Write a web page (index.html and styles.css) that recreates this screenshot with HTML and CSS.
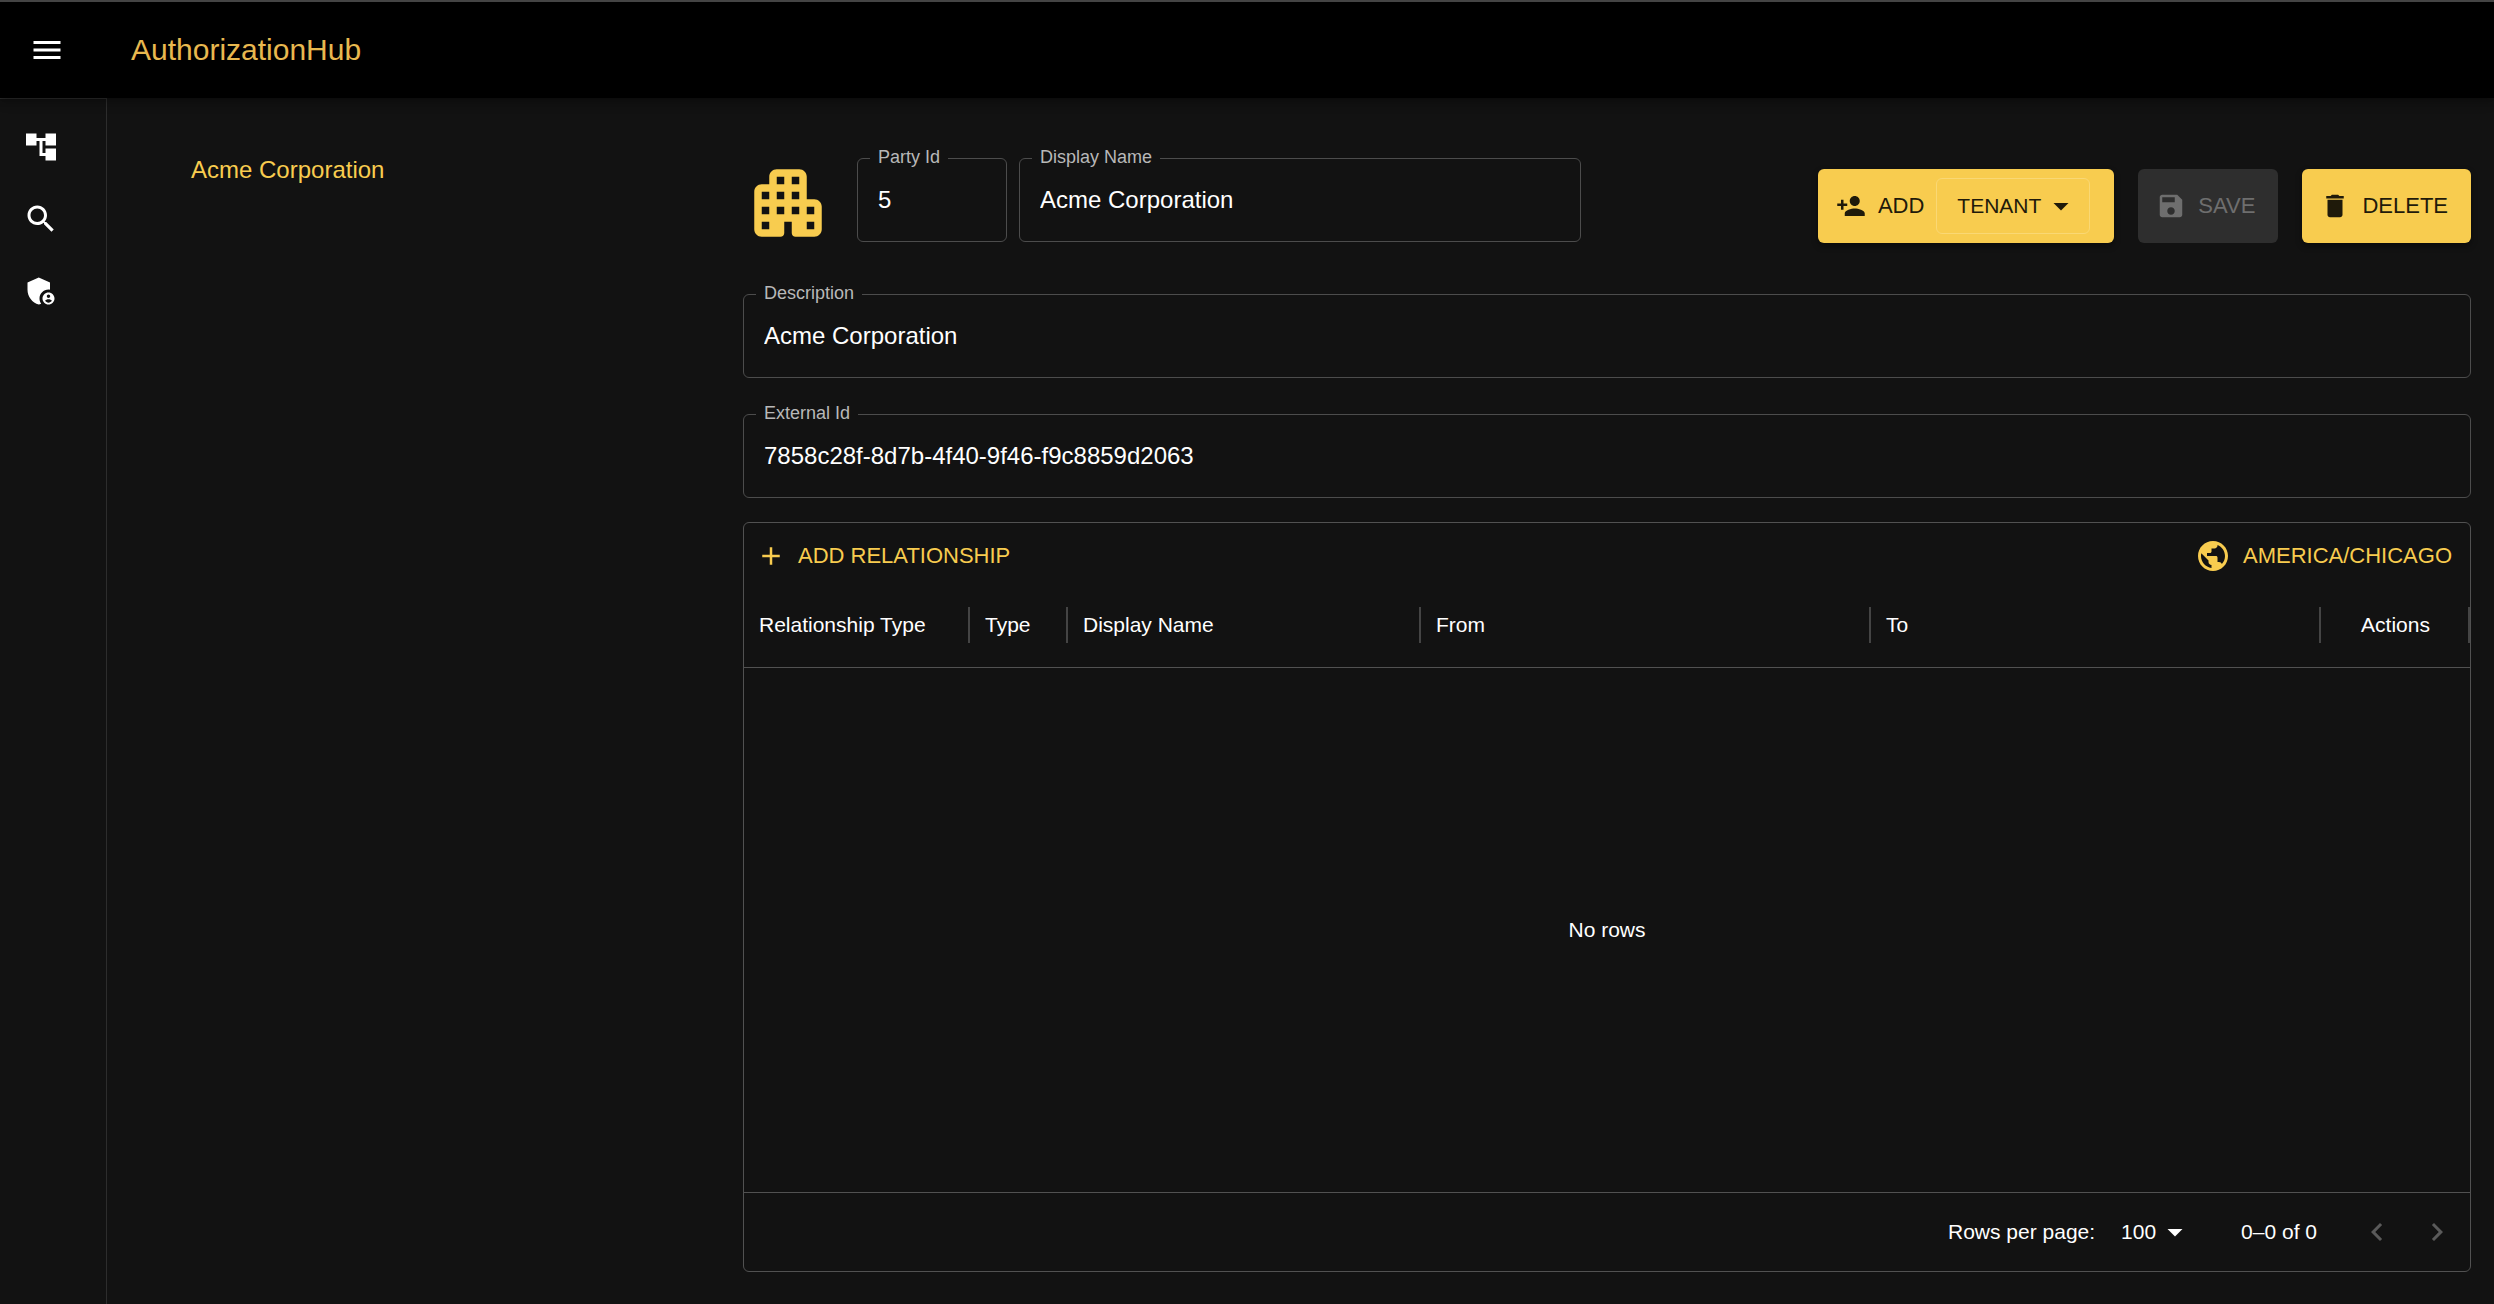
FILE: index.html
```
<!DOCTYPE html>
<html lang="en">
<head>
    <meta charset="UTF-8">
    <meta name="viewport" content="width=device-width, initial-scale=1.0">
    <title>AuthorizationHub</title>
    <link rel="stylesheet" href="styles.css">
</head>
<body>
    <header class="app-bar">
        <button class="icon-button menu-button" type="button" aria-label="Open menu">
            <svg class="icon" viewBox="0 0 24 24"><path d="M3 18h18v-2H3v2zm0-5h18v-2H3v2zm0-7v2h18V6H3z"/></svg>
        </button>
        <h1 class="app-title">AuthorizationHub</h1>
    </header>

    <div class="layout">
        <nav class="sidebar">
            <a class="nav-link" href="#tree" aria-label="Tree">
                <svg class="icon" viewBox="0 0 24 24"><path d="M22 11V3h-7v3H9V3H2v8h7V8h2v10h4v3h7v-8h-7v3h-2V8h2v3z"/></svg>
            </a>
            <a class="nav-link" href="#search" aria-label="Search">
                <svg class="icon" viewBox="0 0 24 24"><path d="M15.5 14h-.79l-.28-.27C15.41 12.59 16 11.11 16 9.5 16 5.91 13.09 3 9.5 3S3 5.91 3 9.5 5.91 16 9.5 16c1.61 0 3.09-.59 4.23-1.57l.27.28v.79l5 4.99L20.49 19l-4.99-5zm-6 0C7.01 14 5 11.99 5 9.5S7.01 5 9.5 5 14 7.01 14 9.5 11.99 14 9.5 14z"/></svg>
            </a>
            <a class="nav-link" href="#admin" aria-label="Administration">
                <svg class="icon" viewBox="0 0 24 24">
                    <path d="M17 11c.34 0 .67.04 1 .09V6.27L10.5 3 3 6.27v4.91c0 4.54 3.2 8.79 7.5 9.82.55-.13 1.08-.32 1.6-.55-.69-.98-1.1-2.17-1.1-3.45 0-3.31 2.69-6 6-6z"/>
                    <path d="M17 13c-2.21 0-4 1.79-4 4s1.79 4 4 4 4-1.79 4-4-1.79-4-4-4zm0 1.38c.62 0 1.12.51 1.12 1.12s-.51 1.12-1.12 1.12-1.12-.51-1.12-1.12.5-1.12 1.12-1.12zm0 5.37c-.93 0-1.74-.46-2.24-1.17.05-.72 1.51-1.08 2.24-1.08s2.19.36 2.24 1.08c-.5.71-1.31 1.17-2.24 1.17z"/>
                </svg>
            </a>
        </nav>

        <aside class="party-tree">
            <a class="tree-item" href="#acme">Acme Corporation</a>
        </aside>

        <main class="details">
            <div class="details-header">
                <svg class="party-icon" viewBox="0 0 24 24"><path d="M17 11V5c0-1.1-.9-2-2-2H9c-1.1 0-2 .9-2 2v2H5c-1.1 0-2 .9-2 2v10c0 1.1.9 2 2 2h5c.55 0 1-.45 1-1v-3h2v3c0 .55.45 1 1 1h5c1.1 0 2-.9 2-2v-6c0-1.1-.9-2-2-2h-2zM7 19H5v-2h2v2zm0-4H5v-2h2v2zm0-4H5V9h2v2zm4 4H9v-2h2v2zm0-4H9V9h2v2zm0-4H9V5h2v2zm4 8h-2v-2h2v2zm0-4h-2V9h2v2zm0-4h-2V5h2v2zm4 12h-2v-2h2v2zm0-4h-2v-2h2v2z"/></svg>
                <div class="header-fields">
                    <fieldset class="field field-id">
                        <legend><label for="partyId">Party Id</label></legend>
                        <input type="text" id="partyId" value="5">
                    </fieldset>
                    <fieldset class="field field-name">
                        <legend><label for="displayName">Display Name</label></legend>
                        <input type="text" id="displayName" value="Acme Corporation">
                    </fieldset>
                </div>
                <div class="actions">
                    <div class="add-group">
                        <button class="button button-add" type="button">
                            <svg class="icon-small" viewBox="0 0 24 24"><path d="M15 12c2.21 0 4-1.79 4-4s-1.79-4-4-4-4 1.79-4 4 1.79 4 4 4zm-9-2V7H4v3H1v2h3v3h2v-3h3v-2H6zm9 4c-2.67 0-8 1.34-8 4v2h16v-2c0-2.66-5.33-4-8-4z"/></svg>
                            ADD
                        </button>
                        <div class="select tenant-select">
                            <select aria-label="Type to add">
                                <option>TENANT</option>
                            </select>
                            <svg class="icon" viewBox="0 0 24 24"><path d="m7 10 5 5 5-5z"/></svg>
                        </div>
                    </div>
                    <button class="button button-filled" type="button" disabled>
                        <svg class="icon-small" viewBox="0 0 24 24"><path d="M17 3H5c-1.11 0-2 .9-2 2v14c0 1.1.89 2 2 2h14c1.1 0 2-.9 2-2V7l-4-4zm-5 16c-1.66 0-3-1.34-3-3s1.34-3 3-3 3 1.34 3 3-1.34 3-3 3zm3-10H5V5h10v4z"/></svg>
                        SAVE
                    </button>
                    <button class="button button-filled" type="button">
                        <svg class="icon-small" viewBox="0 0 24 24"><path d="M6 19c0 1.1.9 2 2 2h8c1.1 0 2-.9 2-2V7H6v12zM19 4h-3.5l-1-1h-5l-1 1H5v2h14V4z"/></svg>
                        DELETE
                    </button>
                </div>
            </div>

            <div class="field-list">
                <fieldset class="field">
                    <legend><label for="description">Description</label></legend>
                    <input type="text" id="description" value="Acme Corporation">
                </fieldset>
                <fieldset class="field">
                    <legend><label for="externalId">External Id</label></legend>
                    <input type="text" id="externalId" value="7858c28f-8d7b-4f40-9f46-f9c8859d2063">
                </fieldset>
            </div>

            <section class="grid">
                <div class="grid-toolbar">
                    <button class="button button-text" type="button">
                        <svg class="icon-small" viewBox="0 0 24 24"><path d="M19 13h-6v6h-2v-6H5v-2h6V5h2v6h6v2z"/></svg>
                        ADD RELATIONSHIP
                    </button>
                    <button class="button button-text" type="button">
                        <svg class="icon" viewBox="0 0 24 24"><path d="M12 2C6.48 2 2 6.48 2 12s4.48 10 10 10 10-4.48 10-10S17.52 2 12 2zm-1 17.93c-3.95-.49-7-3.85-7-7.93 0-.62.08-1.21.21-1.79L9 15v1c0 1.1.9 2 2 2v1.93zm6.9-2.54c-.26-.81-1-1.39-1.9-1.39h-1v-3c0-.55-.45-1-1-1H8v-2h2c.55 0 1-.45 1-1V7h2c1.1 0 2-.9 2-2v-.41c2.93 1.19 5 4.06 5 7.41 0 2.08-.8 3.97-2.1 5.39z"/></svg>
                        AMERICA/CHICAGO
                    </button>
                </div>
                <table class="grid-table">
                    <thead>
                        <tr>
                            <th class="col-relationship">Relationship Type</th>
                            <th class="col-type">Type</th>
                            <th>Display Name</th>
                            <th class="col-date">From</th>
                            <th class="col-date">To</th>
                            <th class="col-actions">Actions</th>
                        </tr>
                    </thead>
                </table>
                <div class="grid-empty">No rows</div>
                <div class="grid-footer">
                    <label for="pageSize">Rows per page:</label>
                    <div class="select page-select">
                        <select id="pageSize">
                            <option>100</option>
                        </select>
                        <svg class="icon" viewBox="0 0 24 24"><path d="m7 10 5 5 5-5z"/></svg>
                    </div>
                    <span class="page-range">0–0 of 0</span>
                    <button class="icon-button" type="button" aria-label="Previous page" disabled>
                        <svg class="icon" viewBox="0 0 24 24"><path d="M15.41 16.59 10.83 12l4.58-4.59L14 6l-6 6 6 6z"/></svg>
                    </button>
                    <button class="icon-button" type="button" aria-label="Next page" disabled>
                        <svg class="icon" viewBox="0 0 24 24"><path d="M8.59 16.59 13.17 12 8.59 7.41 10 6l6 6-6 6z"/></svg>
                    </button>
                </div>
            </section>
        </main>
    </div>
</body>
</html>
```
FILE: styles.css
```
* { box-sizing: border-box; }
body { margin: 0; min-height: 100vh; display: flex; flex-direction: column; background: #121212; color: #fff; font-family: "Liberation Sans", Arial, sans-serif; font-size: 24px; }
button, input, select { font-family: inherit; color: inherit; }
a { color: inherit; text-decoration: none; }
svg { display: block; flex-shrink: 0; fill: currentColor; }
.icon { width: 36px; height: 36px; }
.icon-small { width: 30px; height: 30px; }

/* Header */
.app-bar { position: relative; z-index: 1; display: flex; align-items: center; gap: 54px; height: 98px; padding: 0 17px; background: #000; border-top: 2px solid #444; box-shadow: 0 3px 6px rgba(0, 0, 0, 0.2), 0 3px 12px rgba(0, 0, 0, 0.2); }
.app-title { margin: 0; color: #e8b84f; font-size: 30px; font-weight: normal; }
.icon-button { padding: 12px; border: none; background: none; cursor: pointer; }
.icon-button:disabled { color: #5a5a5a; cursor: default; }

.layout { flex: 1; display: flex; }

/* Sidebar */
.sidebar { width: 107px; padding-top: 12px; border-top: 1px solid #2d2d2d; border-right: 1px solid #2d2d2d; }
.nav-link { display: flex; align-items: center; height: 72px; padding-left: 23px; }
.nav-link:hover { background: #222; }

.party-tree { flex: 0 0 636px; padding: 54px 84px; }
.tree-item { display: block; color: #f8cc4f; line-height: 36px; }

/* Details */
.details { flex: 1; display: flex; flex-direction: column; gap: 24px; padding: 49px 23px 32px 0; }
.details-header { display: flex; align-items: flex-start; gap: 24px; margin-bottom: 11px; }
.party-icon { width: 90px; height: 90px; margin-top: 11px; color: #f8cc4f; }
.header-fields { flex: 1; display: flex; gap: 12px; }
.field { min-width: 0; margin: 0; padding: 0 12px 11px; border: 1px solid #4c4c4c; border-radius: 6px; }
.field legend { margin: 0; padding: 0 8px 3px; color: #b8b8b8; font-size: 18px; line-height: 20px; }
.field label { display: block; }
.field input { display: block; width: 100%; height: 60px; padding: 0 8px; border: none; outline: none; background: none; font-size: 24px; }
.field-id { width: 150px; }
.field-name { width: 562px; }
.field-list { display: flex; flex-direction: column; gap: 25px; }

/* Buttons */
.actions { display: flex; gap: 24px; padding-top: 22px; }
.button { display: flex; align-items: center; gap: 12px; border: none; border-radius: 6px; background: none; font-size: 22px; cursor: pointer; }
.button-filled, .add-group { height: 74px; background: #f8cc4f; color: #1f1a0a; border-radius: 6px; box-shadow: 0 3px 6px rgba(0, 0, 0, 0.4); }
.button-filled { padding: 0 23px 0 18px; }
.button-filled:disabled { background: #2e2e2e; color: #6e6e6e; box-shadow: none; cursor: default; }
.button-add { height: 74px; padding: 0 12px 0 18px; }
.button-text { height: 54px; padding: 0 6px; color: #f8cc4f; }
.add-group { display: flex; align-items: center; padding-right: 24px; }

.select { display: grid; align-items: center; }
.select select, .select svg { grid-area: 1 / 1; }
.select select { width: 100%; border: none; outline: none; appearance: none; background: none; font-size: 21px; cursor: pointer; }
.select svg { justify-self: end; pointer-events: none; }
.tenant-select { width: 154px; height: 56px; padding-right: 10px; border: 1px solid #fad874; border-radius: 6px; }
.tenant-select select { height: 54px; padding: 0 36px 2px 20px; }

/* Relationships grid */
.grid { flex: 1; display: flex; flex-direction: column; border: 1px solid #515151; border-radius: 6px; font-size: 21px; }
.grid-toolbar { display: flex; justify-content: space-between; padding: 6px 12px 0; }
.grid-toolbar .button-text:first-child { padding-left: 0; }
.grid-table { width: 100%; border-collapse: separate; border-spacing: 0; table-layout: fixed; }
.grid-table th { height: 85px; padding: 0 15px; border-bottom: 1px solid #515151; background: linear-gradient(#444, #444) right center / 2px 36px no-repeat; font-weight: normal; text-align: left; }
.grid-table .col-relationship { width: 226px; }
.grid-table .col-type { width: 98px; }
.grid-table .col-date { width: 450px; }
.grid-table .col-actions { width: 149px; text-align: center; }
.grid-empty { flex: 1; display: flex; align-items: center; justify-content: center; }
.grid-footer { display: flex; align-items: center; justify-content: flex-end; height: 79px; padding-right: 3px; border-top: 1px solid #515151; }
.page-select { width: 84px; margin: 0 48px 0 14px; }
.page-select select { height: 36px; padding: 0 36px 2px 12px; }
.page-range { margin-right: 30px; }
```
